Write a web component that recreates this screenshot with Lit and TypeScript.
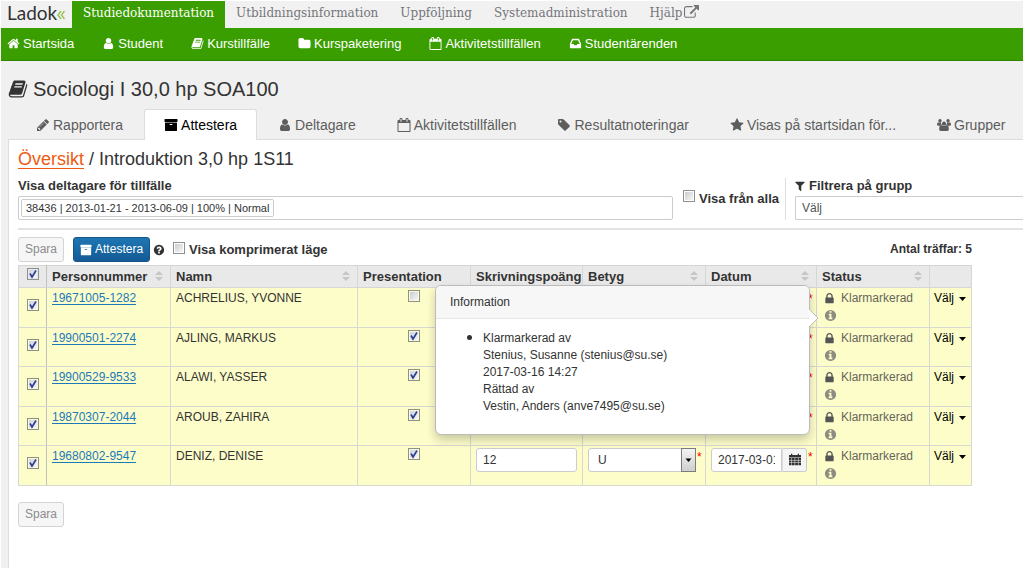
import { LitElement, html, css, svg } from "lit";
import { customElement, property, state } from "lit/decorators.js";
import { classMap } from "lit/directives/class-map.js";

const disc =
  "m384 192q0 209-103 385.500t-279.500 279.500-385.500 103-385.500-103-279.500-279.500-103-385.500 103-385.500 279.500-279.500 385.500-103 385.500 103 279.500 279.500 103 385.500z";

const ICONS: Record<string, string> = {
  home: "M1472 992v480q0 26-19 45t-45 19h-384v-384h-256v384h-384q-26 0-45-19t-19-45v-480q0-1 .5-3t.5-3l575-474 575 474q1 2 1 6zm223-69l-62 74q-8 9-21 11h-3q-13 0-21-7l-692-577-692 577q-12 8-24 7-13-2-21-11l-62-74q-8-10-7-23.500t11-21.500l719-599q32-26 76-26t76 26l244 204v-195q0-14 9-23t23-9h192q14 0 23 9t9 23v408l219 182q10 8 11 21.500t-7 23.500z",
  user: "M1536 1399q0 109-62.500 187t-150.500 78h-854q-88 0-150.500-78t-62.500-187q0-85 8.500-160.500t31.500-152 58.500-131 94-89 134.500-34.500q131 128 313 128t313-128q76 0 134.500 34.500t94 89 58.500 131 31.500 152 8.500 160.500zm-256-887q0 159-112.500 271.500t-271.500 112.500-271.500-112.500-112.500-271.500 112.500-271.500 271.500-112.500 271.500 112.500 112.500 271.500z",
  folder: "M1728 608v704q0 92-66 158t-158 66h-1216q-92 0-158-66t-66-158v-960q0-92 66-158t158-66h320q92 0 158 66t66 158v32h672q92 0 158 66t66 158z",
  book: "M1703 478q40 57 18 129l-275 906q-19 64-76.500 107.500t-122.500 43.500h-923q-77 0-148.500-53.500t-99.500-131.500q-24-67-2-127 0-4 3-27t4-37q1-8-3-21.500t-3-19.500q2-11 8-21t16.500-23.500 16.500-23.500q23-38 45-91.500t30-91.500q3-10 .5-30t-.5-28q3-11 17-28t17-23q21-36 42-92t25-90q1-9-2.500-32t.5-28q4-13 22-30.500t22-22.500q19-26 42.500-84.500t27.500-96.500q1-8-3-25.500t-2-26.500q2-8 9-18t18-23 17-21q8-12 16.500-30.500t15-35 16-36 19.500-32 26.500-23.500 36-11.500 47.500 5.500l-1 3q38-9 51-9h761q74 0 114 56t18 130l-274 906q-36 119-71.500 153.500t-128.500 34.500h-869q-27 0-38 15-11 16-1 43 24 70 144 70h923q29 0 56-15.500t35-41.500l300-987q7-22 5-57 38 15 59 43zm-1064 2q-4 13 2 22.500t20 9.500h608q13 0 25.500-9.500t16.500-22.500l21-64q4-13-2-22.500t-20-9.500h-608q-13 0-25.500 9.500t-16.500 22.500zm-83 256q-4 13 2 22.500t20 9.500h608q13 0 25.500-9.500t16.500-22.500l21-64q4-13-2-22.500t-20-9.500h-608q-13 0-25.500 9.500t-16.500 22.500z",
  archive: "M1088 832q0-26-19-45t-45-19h-256q-26 0-45 19t-19 45 19 45 45 19h256q26 0 45-19t19-45zm576-192v960q0 26-19 45t-45 19h-1408q-26 0-45-19t-19-45v-960q0-26 19-45t45-19h1408q26 0 45 19t19 45zm64-448v256q0 26-19 45t-45 19h-1536q-26 0-45-19t-19-45v-256q0-26 19-45t45-19h1536q26 0 45 19t19 45z",
  pencil: "M491 1536l91-91-235-235-91 91v107h128v128h107zm523-928q0-22-22-22-10 0-17 7l-542 542q-7 7-7 17 0 22 22 22 10 0 17-7l542-542q7-7 7-17zm-54-192l416 416-832 832h-416v-416zm683 96q0 53-37 90l-166 166-416-416 166-165q36-38 90-38 53 0 91 38l235 234q37 39 37 91z",
  tag: "M576 448q0-53-37.500-90.500t-90.500-37.500-90.500 37.500-37.500 90.500 37.500 90.500 90.500 37.500 90.500-37.500 37.500-90.500zm1067 576q0 53-37 90l-491 492q-39 37-91 37-53 0-90-37l-715-716q-38-37-64.500-101t-26.500-117v-416q0-52 38-90t90-38h416q53 0 117 26.500t102 64.500l715 714q37 39 37 91z",
  star: "M1728 647q0 22-26 48l-363 354 86 500q1 7 1 20 0 21-10.500 35.500t-30.500 14.500q-19 0-40-12l-449-236-449 236q-22 12-40 12-21 0-31.500-14.500t-10.500-35.500q0-6 2-20l86-500-364-354q-25-27-25-48 0-37 56-46l502-73 225-455q19-41 49-41t49 41l225 455 502 73q56 9 56 46z",
  filter: "M1595 295q17 41-14 70l-493 493v742q0 42-39 59-13 5-25 5-27 0-45-19l-256-256q-19-19-19-45v-486l-493-493q-31-29-14-70 17-39 59-39h1280q42 0 59 39z",
  lock: "M640 768h512v-192q0-106-75-181t-181-75-181 75-75 181v192zm832 96v576q0 40-28 68t-68 28h-960q-40 0-68-28t-28-68v-576q0-40 28-68t68-28h32v-192q0-184 132-316t316-132 316 132 132 316v192h32q40 0 68 28t28 68z",
  info: "M1152 1376v-160q0-14-9-23t-23-9h-96v-512q0-14-9-23t-23-9h-320q-14 0-23 9t-9 23v160q0 14 9 23t23 9h96v320h-96q-14 0-23 9t-9 23v160q0 14 9 23t23 9h448q14 0 23-9t9-23zm-128-896v-160q0-14-9-23t-23-9h-192q-14 0-23 9t-9 23v160q0 14 9 23t23 9h192q14 0 23-9t9-23zm640 416q0 209-103 385.500t-279.500 279.500-385.500 103-385.500-103-279.500-279.500-103-385.500 103-385.500 279.500-279.500 385.500-103 385.500 103 279.500 279.500 103 385.500z",
  question:
    "M1024 1376v-192q0-14-9-23t-23-9h-192q-14 0-23 9t-9 23v192q0 14 9 23t23 9h192q14 0 23-9t9-23zm256-672q0-88-55.500-163t-138.500-116-170-41q-243 0-371 213-15 24 8 42l132 100q7 6 19 6 16 0 25-12 53-68 86-92 34-24 86-24 48 0 85.500 26t37.500 59q0 38-20 61t-68 45q-63 28-115.500 86.500t-52.500 125.500v36q0 14 9 23t23 9h192q14 0 23-9t9-23q0-19 21.500-49.500t54.500-49.500q32-18 49-28.500t46-35 44.500-48 28-60.500 12.500-81z" +
    disc,
  external: "M1408 928v320q0 119-84.500 203.500t-203.500 84.500h-832q-119 0-203.500-84.500t-84.500-203.500v-832q0-119 84.500-203.500t203.500-84.500h704q14 0 23 9t9 23v64q0 14-9 23t-23 9h-704q-66 0-113 47t-47 113v832q0 66 47 113t113 47h832q66 0 113-47t47-113v-320q0-14 9-23t23-9h64q14 0 23 9t9 23zm384-864v512q0 26-19 45t-45 19-45-19l-176-176-652 652q-10 10-23 10t-23-10l-114-114q-10-10-10-23t10-23l652-652-176-176q-19-19-19-45t19-45 45-19h512q26 0 45 19t19 45z",
  calendar: "M192 1664h1408v-1024h-1408v1024zm384-1216v-288q0-14-9-23t-23-9h-64q-14 0-23 9t-9 23v288q0 14 9 23t23 9h64q14 0 23-9t9-23zm768 0v-288q0-14-9-23t-23-9h-64q-14 0-23 9t-9 23v288q0 14 9 23t23 9h64q14 0 23-9t9-23zm384-64v1280q0 52-38 90t-90 38h-1408q-52 0-90-38t-38-90v-1280q0-52 38-90t90-38h128v-96q0-66 47-113t113-47h64q66 0 113 47t47 113v96h384v-96q0-66 47-113t113-47h64q66 0 113 47t47 113v96h128q52 0 90 38t38 90z",
  inbox: "M1151 960h316q-1-3-2.500-8t-2.500-8l-212-496h-708l-212 496q-1 2-2.500 8t-2.500 8h316l95 192h320zm513 30v482q0 26-19 45t-45 19h-1408q-26 0-45-19t-19-45v-482q0-62 25-123l238-552q10-25 36.500-42t52.500-17h832q26 0 52.500 17t36.500 42l238 552q25 61 25 123z",
  users: "M896 460a270 270 0 1 0 .1 0zM380 130a220 220 0 1 0 .1 0zM1412 130a220 220 0 1 0 .1 0zM560 900q140 130 336 130t336-130q200 10 240 200t40 380q0 170-170 170h-892q-170 0-170-170 0-190 40-380t240-200zM0 830q0-270 160-300 100 80 220 80 70 0 130-20 10 170 100 270-150 10-250 130h-220q-140 0-140-160zM1792 830q0-270-160-300-100 80-220 80-70 0-130-20-10 170-100 270 150 10 250 130h220q140 0 140-160z",
  grid: "M128 256h1536v320h-1536zM384 96h160v260h-160zM1248 96h160v260h-160zM128 640h300v260h-300zM492 640h360v260h-360zM916 640h360v260h-360zM1340 640h324v260h-324zM128 960h300v260h-300zM492 960h360v260h-360zM916 960h360v260h-360zM1340 960h324v260h-324zM128 1280h300v300h-300zM492 1280h360v300h-360zM916 1280h360v300h-360zM1340 1280h324v300h-324z",
};

@customElement("fa-icon")
class FaIcon extends LitElement {
  @property() name = "";
  static styles = css`
    :host {
      display: inline-flex;
      flex: none;
      width: 1em;
      height: 1em;
    }
    svg {
      width: 100%;
      height: 100%;
      fill: currentColor;
      overflow: visible;
    }
  `;
  render() {
    return html`<svg viewBox="0 0 1792 1792" aria-hidden="true">${svg`<path d=${ICONS[this.name] ?? ""}></path>`}</svg>`;
  }
}

interface Participant {
  id: string;
  name: string;
  presentation: boolean;
}

const PARTICIPANTS: Participant[] = [
  { id: "19671005-1282", name: "ACHRELIUS, YVONNE", presentation: false },
  { id: "19900501-2274", name: "AJLING, MARKUS", presentation: true },
  { id: "19900529-9533", name: "ALAWI, YASSER", presentation: true },
  { id: "19870307-2044", name: "AROUB, ZAHIRA", presentation: true },
  { id: "19680802-9547", name: "DENIZ, DENISE", presentation: true },
];

const SECTIONS = ["Studiedokumentation", "Utbildningsinformation", "Uppföljning", "Systemadministration"];

const NAV = [
  ["home", "Startsida"],
  ["user", "Student"],
  ["book", "Kurstillfälle"],
  ["folder", "Kurspaketering"],
  ["calendar", "Aktivitetstillfällen"],
  ["inbox", "Studentärenden"],
];

const TABS = [
  ["pencil", "Rapportera"],
  ["archive", "Attestera"],
  ["user", "Deltagare"],
  ["calendar", "Aktivitetstillfällen"],
  ["tag", "Resultatnoteringar"],
  ["star", "Visas på startsidan för..."],
  ["users", "Grupper"],
];

const COLUMNS: { label: string; cls: string; sortable: boolean }[] = [
  { label: "Personnummer", cls: "c-id", sortable: true },
  { label: "Namn", cls: "c-name", sortable: true },
  { label: "Presentation", cls: "c-pres", sortable: false },
  { label: "Skrivningspoäng", cls: "c-points", sortable: false },
  { label: "Betyg", cls: "c-grade", sortable: true },
  { label: "Datum", cls: "c-date", sortable: true },
  { label: "Status", cls: "c-status", sortable: true },
  { label: "", cls: "c-menu", sortable: false },
];

@customElement("app-root")
class AppRoot extends LitElement {
  @state() private tab = "Attestera";

  static styles = css`
    :host {
      display: block;
      font: 12px/17px "Liberation Sans", Arial, sans-serif;
      color: #333;
      background: #fff;
    }
    * {
      box-sizing: border-box;
    }
    a {
      color: inherit;
      text-decoration: none;
    }
    button,
    input,
    select {
      font: inherit;
      color: inherit;
      margin: 0;
    }
    .page {
      display: flex;
      flex-direction: column;
      min-height: 100vh;
      padding: 1px 0 0 1px;
      overflow: hidden;
    }
    .top {
      display: flex;
      height: 27px;
      background: #f1f1f2;
      font: 12px/25px "DejaVu Serif", serif;
      color: #75757a;
    }
    .logo {
      display: flex;
      align-items: center;
      width: 71px;
      flex: none;
      padding: 0 0 4px 6px;
      font: 19px/23px Lato, sans-serif;
      color: #333;
    }
    .logo svg {
      width: 8px;
      height: 10px;
      margin-top: 4px;
      fill: none;
      stroke: #9cc35a;
      stroke-width: 1.5;
    }
    .section {
      display: flex;
      gap: 2px;
      padding: 0 11px;
      white-space: nowrap;
    }
    .section.on {
      background: #3b9e00;
      color: #fff;
    }
    .section fa-icon {
      font-size: 15px;
      margin-top: 4px;
    }
    .nav {
      display: flex;
      align-items: center;
      gap: 28px;
      height: 33px;
      padding: 0 6px 2px;
      background: #3b9e00;
      border-bottom: 1px solid #2c8400;
      color: #fff;
      font-size: 13px;
      white-space: nowrap;
    }
    .nav a,
    .tab {
      display: flex;
      align-items: center;
      gap: 3px;
    }
    .main {
      flex: 1;
      display: flex;
      flex-direction: column;
      background: #f0f0f0;
      padding-left: 7px;
    }
    h1 {
      display: flex;
      align-items: center;
      gap: 5px;
      margin: 0;
      padding: 16px 0 8px;
      font-size: 20px;
      font-weight: normal;
      line-height: 24px;
    }
    .tabs {
      display: flex;
      gap: 1px;
      height: 30px;
      padding-left: 8px;
      font-size: 14px;
      color: #5d5d5d;
      white-space: nowrap;
    }
    .tab {
      height: 31px;
      padding: 0 19px;
      border: 1px solid transparent;
      border-bottom: 0;
      border-radius: 3px 3px 0 0;
      background: none;
      z-index: 1;
    }
    .tab.on {
      background: #fff;
      border-color: #ddd;
      color: #000;
    }
    .panel {
      flex: 1;
      background: #fff;
      border: 1px solid #ddd;
      border-width: 1px 0 0 1px;
      padding: 7px 0 0 9px;
    }
    h2 {
      margin: 0;
      font-size: 18px;
      font-weight: normal;
      line-height: 24px;
    }
    h2 a {
      color: #ee5a12;
      text-decoration: underline;
      text-underline-offset: 3px;
      text-decoration-thickness: 1px;
    }
    .label {
      display: flex;
      align-items: center;
      gap: 3px;
      font-size: 13px;
      font-weight: bold;
      line-height: 16px;
      white-space: nowrap;
    }
    .filters {
      display: grid;
      grid-template-columns: 655px auto 1fr;
      margin-top: 7px;
      padding-bottom: 8px;
      border-bottom: 2px solid #e3e3e3;
    }
    .field {
      display: flex;
      flex-direction: column;
      gap: 2px;
    }
    .box {
      display: flex;
      align-items: center;
      width: 100%;
      height: 24px;
      padding: 0 2px;
      border: 1px solid #ccc;
      border-radius: 2px;
      background: #fff;
    }
    .box input {
      flex: 1;
      min-width: 0;
      border: 0;
      outline: 0;
      background: none;
    }
    .token {
      height: 18px;
      padding: 0 4px;
      border: 1px solid #ccc;
      border-radius: 2px;
      background: #fff;
      font-size: 11px;
      line-height: 16px;
      white-space: nowrap;
    }
    .all {
      padding: 12px 6px 0 10px;
      align-items: flex-start;
      gap: 4px;
    }
    .all label {
      padding-top: 1px;
    }
    .group {
      border-left: 1px solid #ddd;
      padding-left: 9px;
    }
    .group fa-icon {
      font-size: 12px;
      margin-left: -1px;
    }
    .group select {
      appearance: none;
      padding: 0 6px;
      border-right: 0;
      border-radius: 2px 0 0 2px;
      color: #555;
    }
    input[type="checkbox"] {
      appearance: none;
      flex: none;
      width: 12px;
      height: 12px;
      border: 1px solid #8e8f8f;
      background: linear-gradient(135deg, #c9cdd2, #f6f6f6) content-box #fff;
      padding: 1px;
      display: block;
    }
    input[type="checkbox"]:checked {
      background:
        url("data:image/svg+xml,%3Csvg xmlns='http://www.w3.org/2000/svg' viewBox='0 0 10 10'%3E%3Cpath d='M2 4.500l2 3.500L8 1.500' fill='none' stroke='%23313f94' stroke-width='1.700'/%3E%3C/svg%3E"),
        linear-gradient(135deg, #cbd3e4, #f4f6fa) content-box #fff;
    }
    .work {
      max-width: 954px;
    }
    .bar {
      display: flex;
      align-items: center;
      padding: 7px 0 3px;
    }
    .btn {
      display: flex;
      align-items: center;
      gap: 3px;
      height: 25px;
      padding: 0 6px;
      border: 1px solid #d4d4d4;
      border-radius: 3px;
      background: #f6f6f6;
      white-space: nowrap;
    }
    .btn:disabled {
      color: #8c8c8c;
    }
    .btn.primary {
      margin: 0 3px 0 9px;
      border-color: #14568c;
      background: linear-gradient(#1d76b4, #145a94);
      color: #fff;
    }
    .bar .label {
      margin-left: 8px;
      gap: 4px;
    }
    .bar .label input {
      margin-bottom: 4px;
    }
    .bar .hits {
      margin-left: auto;
      font-weight: bold;
    }
    .tablewrap {
      position: relative;
    }
    table {
      width: 100%;
      table-layout: fixed;
      border-collapse: collapse;
    }
    .c-check {
      width: 28px;
    }
    .c-id {
      width: 124px;
    }
    .c-name {
      width: 187px;
    }
    .c-pres {
      width: 113px;
    }
    .c-points {
      width: 112px;
    }
    .c-grade {
      width: 123px;
    }
    .c-date {
      width: 111px;
    }
    .c-status {
      width: 113px;
    }
    .c-menu {
      width: auto;
    }
    th,
    td {
      border: 1px solid #d8d8d2;
      padding: 2px 5px;
      text-align: left;
      vertical-align: top;
    }
    thead th {
      height: 22px;
      padding: 1px 5px 2px;
      background: #e9e9e9;
      border-color: #d6d6d6;
      font-size: 13px;
      white-space: nowrap;
      vertical-align: middle;
    }
    .head {
      display: flex;
      align-items: center;
      justify-content: space-between;
    }
    .head svg {
      width: 8px;
      height: 10px;
      margin-right: 2px;
      fill: #c6c6c6;
    }
    tbody tr {
      height: 40px;
      background: #fdfdca;
    }
    tbody tr:nth-child(even) {
      height: 39px;
    }
    .first {
      border-right-color: #c2c2bc;
      vertical-align: middle;
    }
    .first input,
    .pres input {
      margin: 0 auto 5px;
    }
    td a {
      color: #1c7ab8;
      text-decoration: underline;
      text-underline-offset: 2px;
    }
    .text {
      height: 24px;
      width: 100%;
      padding: 0 6px;
      border: 1px solid #ccc;
      border-radius: 3px;
      background: #fff;
    }
    .control {
      display: flex;
      align-items: flex-start;
    }
    .star {
      flex: none;
      width: 6px;
      padding: 2px 0 0 1px;
      color: #e00;
      line-height: 14px;
    }
    .combo {
      flex: 1;
      display: grid;
      grid-template-columns: 1fr 15px;
    }
    .combo select {
      appearance: none;
      grid-area: 1 / 1 / 2 / 3;
      padding-left: 9px;
    }
    .combo svg {
      grid-area: 1 / 2;
      width: 15px;
      height: 24px;
      border: 1px solid #7c7c7c;
      background: linear-gradient(#f3f3f3, #cfcfcf);
      pointer-events: none;
    }
    .tight {
      padding-right: 3px;
    }
    .date {
      flex: 1;
      min-width: 0;
      border-radius: 3px 0 0 3px;
    }
    .pick {
      flex: none;
      width: 25px;
      height: 24px;
      padding: 0;
      border: 1px solid #ccc;
      border-left-color: #ddd;
      border-radius: 0 3px 3px 0;
      background: #f5f5f5;
      font-size: 14px;
      line-height: 0;
    }
    .status {
      display: grid;
      grid-template-columns: 16px auto;
      gap: 0 3px;
      justify-items: start;
      align-items: center;
      color: #66665a;
    }
    .status fa-icon {
      font-size: 13px;
      margin-left: 1px;
      color: #555;
    }
    .info {
      height: 17px;
      padding: 0;
      border: 0;
      background: none;
      display: flex;
      align-items: center;
    }
    .info fa-icon {
      color: #8c8c80;
      margin-left: 2px;
    }
    .menu {
      display: flex;
      align-items: center;
      gap: 5px;
      padding: 0;
      border: 0;
      background: none;
      color: #000;
      margin-left: -1px;
    }
    .menu svg {
      width: 7px;
      height: 4px;
    }
    .popover {
      position: absolute;
      top: 20px;
      right: 162px;
      width: 375px;
      border: 1px solid #bbb;
      border-radius: 6px;
      background: #fff;
      box-shadow: 0 5px 10px rgba(0, 0, 0, 0.2);
    }
    .popover h3 {
      margin: 0;
      padding: 8px 14px 7px;
      border-bottom: 1px solid #e8e8e8;
      border-radius: 5px 5px 0 0;
      background: #f7f7f7;
      font-size: 12px;
      font-weight: normal;
    }
    .popover ul {
      margin: 0;
      padding: 9px 14px 19px 47px;
    }
    .popover li::marker {
      font-size: 16px;
    }
    .popover .arrow {
      position: absolute;
      left: 100%;
      top: 22px;
      width: 10px;
      height: 20px;
      fill: #fff;
      stroke: #bbb;
    }
    .foot {
      padding-top: 16px;
    }
  `;

  private tick(label: string, checked: boolean) {
    return html`<input type="checkbox" aria-label=${label} .checked=${checked} />`;
  }

  private row(p: Participant) {
    return html`<tr>
      <td class="first">${this.tick("Välj " + p.name, true)}</td>
      <td><a href="#">${p.id}</a></td>
      <td>${p.name}</td>
      <td class="pres">${this.tick("Presentation " + p.name, p.presentation)}</td>
      <td><input class="text" type="text" aria-label="Skrivningspoäng" value="12" /></td>
      <td class="tight">
        <div class="control">
          <div class="combo">
            <select class="text" aria-label="Betyg"><option>U</option><option>G</option><option>VG</option></select>
            <svg viewBox="0 0 13 22" aria-hidden="true"><path d="M3.500 9.500h6l-3 3.500z" /></svg>
          </div>
          <span class="star">*</span>
        </div>
      </td>
      <td class="tight">
        <div class="control">
          <input class="text date" type="text" aria-label="Datum" value="2017-03-01" />
          <button class="pick" aria-label="Välj datum"><fa-icon name="grid"></fa-icon></button>
          <span class="star">*</span>
        </div>
      </td>
      <td>
        <div class="status">
          <fa-icon name="lock"></fa-icon><span>Klarmarkerad</span>
          <button class="info" aria-label="Information"><fa-icon name="info"></fa-icon></button>
        </div>
      </td>
      <td>
        <button class="menu">Välj <svg viewBox="0 0 7 4" aria-hidden="true"><path d="M0 0h7L3.500 4z" /></svg></button>
      </td>
    </tr>`;
  }

  render() {
    return html`<div class="page">
      <header class="top">
        <a class="logo" href="#">Ladok<svg viewBox="0 0 8 10" aria-hidden="true"><path d="M4 1L1 5l3 4M7.500 1l-3 4 3 4" /></svg></a>
        ${SECTIONS.map((s, i) => html`<a href="#" class=${classMap({ section: true, on: i === 0 })}>${s}</a>`)}
        <a href="#" class="section">Hjälp <fa-icon name="external"></fa-icon></a>
      </header>
      <nav class="nav">
        ${NAV.map(([icon, text]) => html`<a href="#"><fa-icon name=${icon}></fa-icon>${text}</a>`)}
      </nav>
      <main class="main">
        <h1><fa-icon name="book"></fa-icon>Sociologi I 30,0 hp SOA100</h1>
        <div class="tabs" role="tablist">
          ${TABS.map(
            ([icon, text]) => html`<button
              role="tab"
              aria-selected=${this.tab === text}
              class=${classMap({ tab: true, on: this.tab === text })}
              @click=${() => (this.tab = text)}
            >
              <fa-icon name=${icon}></fa-icon>${text}
            </button>`
          )}
        </div>
        <section class="panel">
          <h2><a href="#">Översikt</a> / Introduktion 3,0 hp 1S11</h2>
          <div class="filters">
            <div class="field">
              <label class="label" for="occasion">Visa deltagare för tillfälle</label>
              <div class="box">
                <span class="token">38436 | 2013-01-21 - 2013-06-09 | 100% | Normal</span>
                <input id="occasion" type="text" />
              </div>
            </div>
            <div class="label all">
              <input id="all" type="checkbox" />
              <label for="all">Visa från alla</label>
            </div>
            <div class="field group">
              <label class="label" for="group"><fa-icon name="filter"></fa-icon>Filtrera på grupp</label>
              <select class="box" id="group"><option>Välj</option></select>
            </div>
          </div>
          <div class="work">
            <div class="bar">
              <button class="btn" disabled>Spara</button>
              <button class="btn primary"><fa-icon name="archive"></fa-icon>Attestera</button>
              <fa-icon name="question"></fa-icon>
              <label class="label"><input type="checkbox" />Visa komprimerat läge</label>
              <span class="hits">Antal träffar: 5</span>
            </div>
            <div class="tablewrap">
              <table>
                <thead>
                  <tr>
                    <th class="c-check first">${this.tick("Välj alla", true)}</th>
                    ${COLUMNS.map(
                      (c) => html`<th class=${c.cls}>
                        <div class="head">
                          ${c.label}${c.sortable
                            ? html`<svg viewBox="0 0 8 10" aria-hidden="true"><path d="M0 4h8L4 0zM0 6h8l-4 4z" /></svg>`
                            : ""}
                        </div>
                      </th>`
                    )}
                  </tr>
                </thead>
                <tbody>
                  ${PARTICIPANTS.map((p) => this.row(p))}
                </tbody>
              </table>
              <div class="popover" role="tooltip">
                <h3>Information</h3>
                <ul>
                  <li>
                    Klarmarkerad av<br />Stenius, Susanne (stenius@su.se)<br />2017-03-16 14:27<br />Rättad av<br />Vestin,
                    Anders (anve7495@su.se)
                  </li>
                </ul>
                <svg class="arrow" viewBox="0 0 10 20" aria-hidden="true"><path d="M-1 0L9 10L-1 20" /></svg>
              </div>
            </div>
            <div class="foot"><button class="btn" disabled>Spara</button></div>
          </div>
        </section>
      </main>
    </div>`;
  }
}
